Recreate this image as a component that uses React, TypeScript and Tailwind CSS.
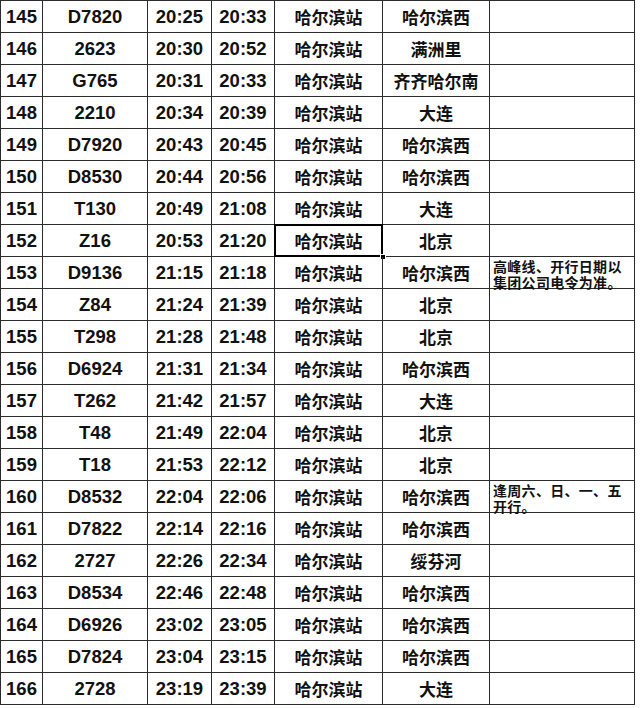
import * as React from "react";

type Train = {
  no: number;
  code: string;
  depart: string;
  arrive: string;
  from: string;
  to: string;
  note?: string;
};

const TRAINS: Train[] = [
  { no: 145, code: "D7820", depart: "20:25", arrive: "20:33", from: "哈尔滨站", to: "哈尔滨西" },
  { no: 146, code: "2623", depart: "20:30", arrive: "20:52", from: "哈尔滨站", to: "满洲里" },
  { no: 147, code: "G765", depart: "20:31", arrive: "20:33", from: "哈尔滨站", to: "齐齐哈尔南" },
  { no: 148, code: "2210", depart: "20:34", arrive: "20:39", from: "哈尔滨站", to: "大连" },
  { no: 149, code: "D7920", depart: "20:43", arrive: "20:45", from: "哈尔滨站", to: "哈尔滨西" },
  { no: 150, code: "D8530", depart: "20:44", arrive: "20:56", from: "哈尔滨站", to: "哈尔滨西" },
  { no: 151, code: "T130", depart: "20:49", arrive: "21:08", from: "哈尔滨站", to: "大连" },
  { no: 152, code: "Z16", depart: "20:53", arrive: "21:20", from: "哈尔滨站", to: "北京" },
  {
    no: 153,
    code: "D9136",
    depart: "21:15",
    arrive: "21:18",
    from: "哈尔滨站",
    to: "哈尔滨西",
    note: "高峰线、开行日期以集团公司电令为准。",
  },
  { no: 154, code: "Z84", depart: "21:24", arrive: "21:39", from: "哈尔滨站", to: "北京" },
  { no: 155, code: "T298", depart: "21:28", arrive: "21:48", from: "哈尔滨站", to: "北京" },
  { no: 156, code: "D6924", depart: "21:31", arrive: "21:34", from: "哈尔滨站", to: "哈尔滨西" },
  { no: 157, code: "T262", depart: "21:42", arrive: "21:57", from: "哈尔滨站", to: "大连" },
  { no: 158, code: "T48", depart: "21:49", arrive: "22:04", from: "哈尔滨站", to: "北京" },
  { no: 159, code: "T18", depart: "21:53", arrive: "22:12", from: "哈尔滨站", to: "北京" },
  {
    no: 160,
    code: "D8532",
    depart: "22:04",
    arrive: "22:06",
    from: "哈尔滨站",
    to: "哈尔滨西",
    note: "逢周六、日、一、五开行。",
  },
  { no: 161, code: "D7822", depart: "22:14", arrive: "22:16", from: "哈尔滨站", to: "哈尔滨西" },
  { no: 162, code: "2727", depart: "22:26", arrive: "22:34", from: "哈尔滨站", to: "绥芬河" },
  { no: 163, code: "D8534", depart: "22:46", arrive: "22:48", from: "哈尔滨站", to: "哈尔滨西" },
  { no: 164, code: "D6926", depart: "23:02", arrive: "23:05", from: "哈尔滨站", to: "哈尔滨西" },
  { no: 165, code: "D7824", depart: "23:04", arrive: "23:15", from: "哈尔滨站", to: "哈尔滨西" },
  { no: 166, code: "2728", depart: "23:19", arrive: "23:39", from: "哈尔滨站", to: "大连" },
];

const latin = "font-['Liberation_Sans',Arial,sans-serif] text-[18.5px] font-bold";
const cjk = "font-['Noto_Sans_CJK_SC',sans-serif] text-[17px] font-bold";
const cell = "flex items-center justify-center border-r border-b border-[#2b2b2b] text-[#111]";

export default function App() {
  return (
    <div className="h-[708px] w-[640px] overflow-hidden bg-white">
      <div className="grid w-[635px] grid-cols-[42px_105px_64px_63px_108px_107px_145px] grid-rows-[repeat(22,32px)] border-l border-t border-[#2b2b2b]">
        {TRAINS.map((t) => (
          <React.Fragment key={t.no}>
            <div className={`${cell} ${latin}`}>{t.no}</div>
            <div className={`${cell} ${latin}`}>{t.code}</div>
            <div className={`${cell} ${latin}`}>{t.depart}</div>
            <div className={`${cell} ${latin}`}>{t.arrive}</div>
            <div className={`${cell} ${cjk} relative`}>
              {t.from}
              {t.no === 152 && (
                <>
                  <span className="pointer-events-none absolute -top-px -left-px -right-px -bottom-px border-2 border-black" />
                  <span className="absolute -right-[4px] -bottom-[4px] h-[6px] w-[6px] border border-white bg-black" />
                </>
              )}
            </div>
            <div className={`${cell} ${cjk}`}>{t.to}</div>
            <div className="border-r border-b border-[#2b2b2b] px-[3px] pt-px font-['Noto_Sans_CJK_SC',sans-serif] text-[14px] leading-[16px] tracking-[0.3px] font-bold text-[#111]">
              {t.note}
            </div>
          </React.Fragment>
        ))}
      </div>
    </div>
  );
}
